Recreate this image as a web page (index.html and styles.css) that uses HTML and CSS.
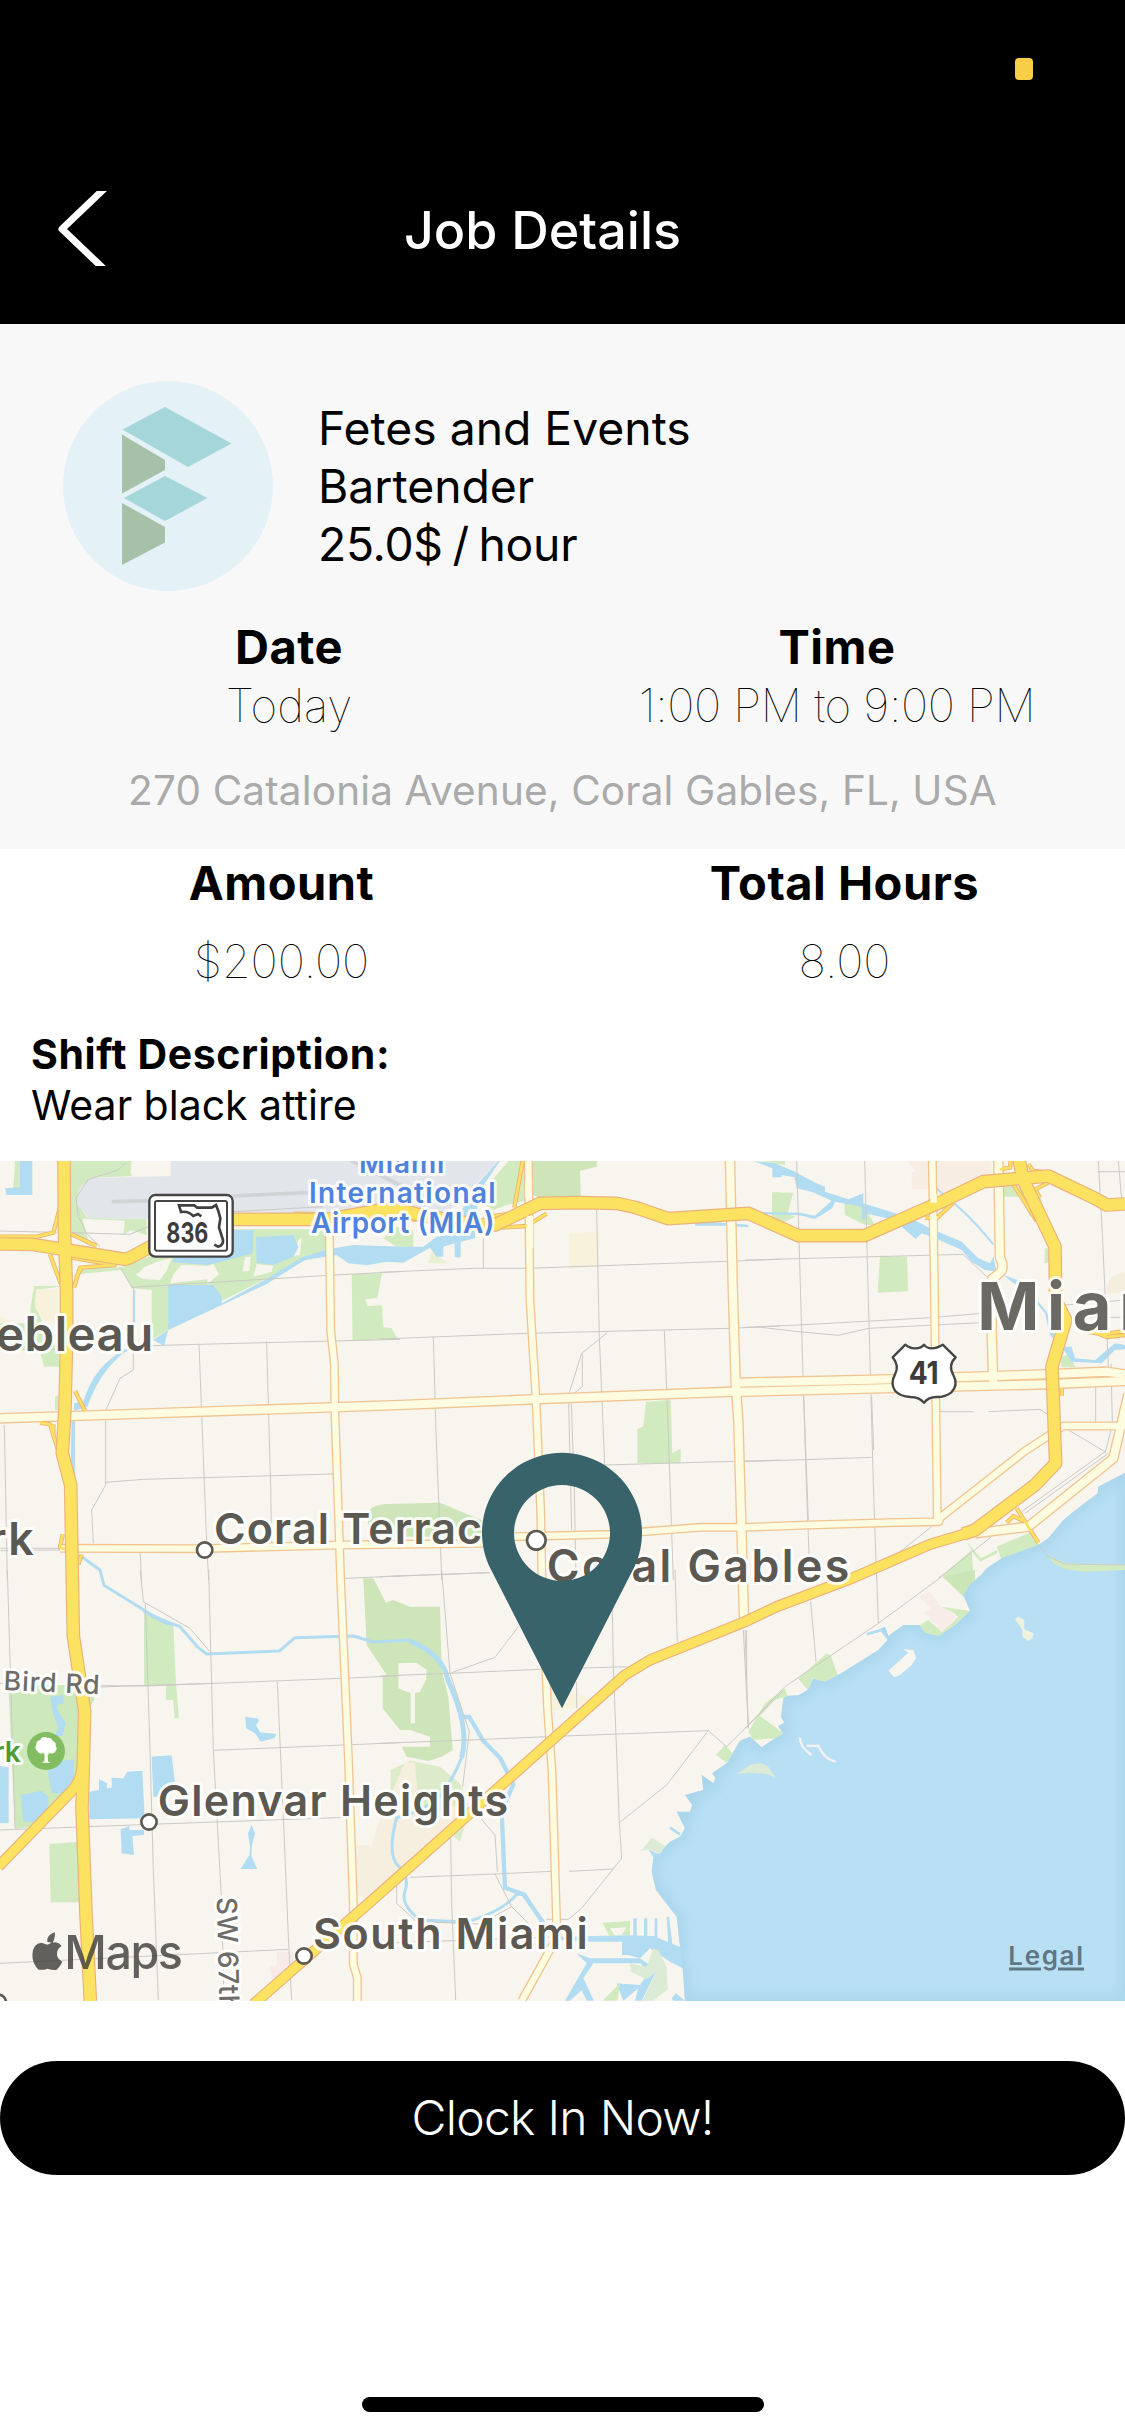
FILE: index.html
```html
<!DOCTYPE html>
<html lang="en">
<head>
<meta charset="utf-8">
<title>Job Details</title>
<link rel="stylesheet" href="styles.css">
</head>
<body>
<div class="screen">
  <header class="header">
    <div class="status"><span class="mic-dot"></span></div>
    <div class="nav">
      <svg class="back" width="50" height="75" viewBox="0 0 50 75"><path d="M48 -4L4 38 48 80" fill="none" stroke="#fff" stroke-width="7" stroke-linejoin="round"/></svg>
      <h1 class="title">Job Details</h1>
    </div>
  </header>

  <section class="summary">
    <div class="company">
      <svg class="logo" width="210" height="210" viewBox="63 381 210 210">
        <circle cx="168" cy="486" r="105" fill="#e4f1f7"/>
        <g fill="#a4d6da"><path d="M122.500 429.500L165 407l66.500 36.500L188 467z"/><path d="M124 498l41-22 42.500 22L165 521z"/></g>
        <g fill="#a7c1a9"><path d="M122 434.500L165 460v10l-43 23.500z"/><path d="M122 503l43 24v15.500L122 565z"/></g>
      </svg>
      <div class="company-text">
        <div>Fetes and Events</div>
        <div>Bartender</div>
        <div class="rate">25.0$ / hour</div>
      </div>
    </div>
    <div class="pair when">
      <div class="cell"><div class="label">Date</div><div class="value">Today</div></div>
      <div class="cell"><div class="label">Time</div><div class="value time">1:00 PM to 9:00 PM</div></div>
    </div>
    <div class="address">270 Catalonia Avenue, Coral Gables, FL, USA</div>
  </section>

  <section class="pair totals">
    <div class="cell"><div class="label">Amount</div><div class="value">$200.00</div></div>
    <div class="cell"><div class="label">Total Hours</div><div class="value">8.00</div></div>
  </section>

  <section class="shift">
    <div class="shift-title">Shift Description:</div>
    <div class="shift-text">Wear black attire</div>
  </section>

  <svg class="map" width="1125" height="840" viewBox="0 0 3375 2520">
    <defs>
      <path id="bay" d="M3375 935L3295 977 3293 997 3220 1052 3190 1077 3145 1132 3115 1152 3005 1192 2960 1222 2945 1240 2925 1257 2907 1272 2890 1302 2910 1349 2865 1392 2815 1425 2770 1409 2760 1392 2710 1392 2665 1425 2655 1397 2600 1422 2645 1410 2663 1437 2635 1467 2520 1539 2510 1542 2475 1562 2440 1552 2423 1587 2395 1603 2360 1605 2350 1612 2343 1667 2353 1685 2335 1695 2348 1717 2325 1732 2285 1759 2250 1727 2220 1739 2180 1807 2137 1837 2147 1852 2140 1867 2105 1842 2110 1887 2055 1902 2077 1932 2070 1952 2030 1952 2040 1972 2055 2002 2040 2027 2010 2042 1960 2092 1955 2132 1968 2187 2030 2267 2040 2357 2010 2362 2048 2422 2055 2520H3375z"/>
      <clipPath id="bay-clip"><use href="#bay"/></clipPath>
      <filter id="soft" x="-10%" y="-10%" width="120%" height="120%"><feGaussianBlur stdDeviation="16"/></filter>

      <g id="hwy">
        <path d="M192 0L193 200 200 400 200 527 195 740 187 877 212 972 217 1257 220 1425 254 1650 249 1850 246 1940 258 2260 271 2520"/>
        <path d="M0 249L95 250 375 295 390 290 450 258 600 190 700 175 985 175 1140 147 1200 147 1260 162 1440 192 1485 192 1620 127 1740 125 1850 127 1905 139 2005 173 2245 157 2395 224H2593L2825 122 2950 62 3065 52 3145 45 3285 112 3320 132 3375 129"/>
        <path d="M3057 -5L3070 57 3165 257 3167 417 3197 477 3156 617 3167 907 3105 972 3025 1032 2925 1107 2890 1119"/>
      </g>
      <g id="us1"><path d="M2930 1104L2900 1117 2790 1150 2555 1252 2330 1337 2235 1382 1950 1497 1875 1542 1140 2197 760 2530"/><path d="M-5 2117L215 1890Q240 1865 246 1820"/></g>
      <g id="ramps">
        <path d="M180 140L160 215 110 227H0M215 220L290 255M150 280L183 370M215 290L345 312 240 320 222 380M245 320L228 350M225 690L255 750M120 785L150 790 175 870M160 790V820M188 1120L180 1160 195 1165M245 1180L235 1210M1568 0L1543 140M1480 165L1600 150M1500 200L1580 195 1640 158M880 158L985 160M2775 170L2810 172 2860 125M3000 25L3030 20 3032 0M3040 70L3110 180M3085 10L3100 30 3145 35M3145 65L3105 85 3120 110M3185 680V705M3250 510L3310 520 3375 510M3290 516L3320 528 3375 522M3050 1042L3115 1145M3020 1085L3040 1065 3070 1080M1160 165L1440 200"/>
      </g>
      <g id="wide">
        <path d="M0 772L220 765 1200 732 1600 715 2195 692H2235L3135 670 3375 660"/>
        <path d="M2215 665L2675 655 3135 640 3320 632 3375 640"/>
        <path d="M2190 0L2198 370 2207 667 2215 780 2232 1370"/>
        <path d="M2995 0L3000 290Q3015 320 3000 335L2975 355V510L2980 680"/>
        <path d="M3385 700L3340 892 3085 1097 2925 1117"/>
      </g>
      <g id="narrow">
        <path d="M180 1162L600 1163 1020 1152 1440 1147 1545 1127 1830 1120 2100 1099H2235L2425 1092 2665 1085 2817 1082 2820 1070 3075 870 3190 795H3375"/>
        <path d="M988 207L992 507 1003 607 1005 760 1022 1257 1045 1787 1060 2227V2410L1072 2450V2520"/>
        <path d="M1585 0L1590 420 1608 712 1622 1050 1626 1257 1643 1650 1656 1830 1670 2290V2330L1565 2520"/>
        <path d="M2797 0L2803 370 2812 1080"/>
      </g>
    </defs>

    <rect width="3375" height="2520" fill="#f8f5ee"/>

    <!-- parks, airport and built-up areas -->
    <g transform="translate(0 -33)">
      <g fill="#d2eac0">
        <path d="M212 33H395V78L270 84 236 120 232 160 262 203 440 208V255L390 240 370 258 375 212 247 206 270 290 212 250z"/>
        <path d="M45 33H60V115H40z"/>
        <path d="M225 360L370 350 445 320 530 300 700 238H985V300L830 370 660 455 505 540 455 570V420L395 415 365 360 240 372z"/>
        <path d="M800 185L870 182 875 190H790z"/>
        <path d="M103 408H180L178 410 108 420 105 470 125 490V520L140 560 178 590V650H133L120 605 0 595V520L90 520 92 470z"/>
        <path d="M1055 372L1146 370 1132 445 1096 448 1103 468 1146 466 1150 532 1174 534 1194 567 1058 572z"/>
        <path d="M165 740L175 735V780H165z"/>
        <path d="M1185 230L1240 240V290H1190L1150 265z"/>
      </g>
      <g fill="#f8f5ee">
        <path d="M435 350L480 332 515 325 500 362 480 390 430 387 408 375z"/><path d="M522 370L545 345 625 347 640 342 657 373 622 402 622 388 510 400z"/>
        <path d="M735 322L752 320 748 362 728 364z"/><path d="M770 343L820 347 815 365 760 380z"/><path d="M895 270L905 262 900 315 880 318z"/>
      </g>
      <path d="M108 418H180V520L125 510 105 470zM0 500L40 515 0 518z" fill="#f8f1dc"/>
      <path d="M512 33V78L270 85 238 115 232 160 265 203 440 207 720 187 1340 190 1430 100 1495 33z" fill="#e2e5e9"/>
      <path d="M340 155L450 152 700 138 1000 124M1055 33L1240 125" fill="none" stroke="#d1d4d6" stroke-width="11" stroke-linecap="round"/>
      <path d="M395 33H510V73H392z" fill="#f8f5ee"/>
      <path d="M1105 1090Q1110 1065 1160 1062L1320 1058 1420 1100 1445 1110V1160H1105z" fill="#cde5b9"/>
    </g>
    <g transform="translate(1140 -33)">
      <path d="M445 33H650V50L600 62 602 143H480L445 130z" fill="#cde5b9"/>
      <path d="M385 33H445V150L380 165 340 180 290 150 345 80z" fill="#d2eac0"/>
      <path d="M567 250L657 245V350L567 356z" fill="#f8f1dc"/>
      <path d="M145 340L155 305 205 340z" fill="#e9efd3"/>
      <path d="M798 755L872 750 877 908 902 896V940H772V838L790 828z" fill="#d2eac0"/>
      <path d="M1177 128H1240L1220 200 1177 185z" fill="#d2eac0"/>
    </g>
    <g transform="translate(2235 -33)">
      <path d="M485 33H740V80L600 150 580 118H500V65H515z" fill="#f7ede2"/>
      <g fill="#d2eac0">
        <path d="M82 127H104L122 188 150 200 110 220 80 215z"/><path d="M405 317L486 320 489 424 398 428z"/>
        <path d="M775 105L820 110 880 120 890 150 855 200 830 140 775 140z"/><path d="M900 295H918V335L898 340z"/>
        <path d="M298 160L355 165 390 225 360 225 300 195z"/><path d="M945 620L970 615 992 652H950z"/>
        <path d="M50 33H120V45L80 38z"/><path d="M755 1190L860 1145 882 1185 770 1230z"/>
        <path d="M590 1278L680 1200 690 1335 655 1340z"/><path d="M665 1175L708 1225 755 1200 757 1210 705 1235 685 1210z"/>
      </g>
      <path d="M1100 380L1140 365V430H1085V405z" fill="#f5eede"/>
    </g>
    <g transform="translate(0 1227)">
      <path d="M25 345H240L285 385 255 440 240 620 100 770 45 777z" fill="#cde9bb"/>
      <g fill="#d2eac0"><path d="M432 130L520 165 528 340 537 445H523L520 390H498V345H432z"/><path d="M148 822L240 815V997H152z"/><path d="M0 900V968z"/></g>
      <path d="M1090 25H1120L1158 98 1180 90 1230 110 1320 110 1325 300 1345 380 1358 540 1325 560 1285 573 1220 560 1205 530H1290V500L1230 480 1200 480 1148 415V320L1160 315 1100 225z" fill="#cde5b9"/>
      <path d="M1195 280L1250 278 1280 300 1278 330 1260 365 1245 370V460H1232V370L1195 355z" fill="#f8f5ee"/>
      <path d="M1172 600L1230 572 1320 590 1380 640 1405 700 1390 780 1380 815 1340 780 1250 760 1172 740z" fill="#dcebc9"/>
      <path d="M1140 750L1215 575 1245 580 1260 740 1390 700 1400 720 1140 960 1110 990 1072 975 1068 828 1115 825z" fill="#f6eede"/>
      <path d="M808 1190L830 1185V1145H880V1180L820 1235z" fill="#f8ebe7"/>
      <path d="M1650 330L1725 370 1770 385 1720 415 1650 422z" fill="#f8f1dc"/>
    </g>

    <!-- water -->
    <use href="#bay" fill="#b8dff4"/>
    <g clip-path="url(#bay-clip)"><use href="#bay" fill="none" stroke="#a9d5eb" stroke-width="34" filter="url(#soft)"/></g>
    <g fill="#b2dcf1">
      <g transform="translate(0 -33)">
        <path d="M60 33H97V135H20L15 115 60 112z"/>
        <path d="M520 320L700 240H760L758 310 720 320 625 345 520 337z"/>
        <path d="M768 262L880 255 895 292 880 320 820 345 770 338z"/>
        <path d="M505 405H640L665 440V460L790 392 910 320 985 298 1060 285 1210 290 1270 290 1310 260 1420 240 1380 190 1425 110 1495 33H1500L1435 130 1425 265 1382 275V322H1364V280L1330 290V320H1310L1290 293 1210 338 1160 335 1100 346 1045 340 1010 315 915 330 800 402 505 540 492 587 460 570 505 540z"/>
        <path d="M375 598H388Q305 650 262 770L222 782V760L250 755Q280 650 375 598z"/>
        <path d="M216 815H224V980L214 950zM404 420V570" stroke="#b2dcf1" stroke-width="3"/>
      </g>
      <g transform="translate(2235 -33)">
        <path d="M25 33L90 40 150 65 205 95 240 110 240 125 310 148 355 130V160L450 190 490 200 555 235 650 275 700 325 735 340 745 320 755 365 720 360 680 335 650 300 560 260 530 250 512 267 470 230 450 210 360 190 365 205 350 210V170L270 155 262 175 210 207 160 195 50 192V186L165 188 210 197 260 152 200 125 155 115 148 82 110 75V82H82V55z"/>
        <path d="M775 375L830 395 905 485 930 560 960 590 980 590 990 625 1050 630 1110 580 1140 585V598L1110 600 1070 640 980 635 950 590 915 555 900 490 850 430 800 395z"/>
      </g>
      <g transform="translate(0 1227)">
        <path d="M736 440L770 445 778 450 768 465 780 487 830 492 822 505 782 515 765 490 738 475z"/>
        <path d="M755 765L765 790 755 830V860L772 897H722L748 855 750 830 744 790z"/>
        <path d="M455 560L515 556 525 640 470 680H460z"/><path d="M268 665L297 660V628L322 640 320 655 335 653V623L370 625 382 605 427 602 434 745 268 748z"/>
        <path d="M362 778L388 768V780H432V795L397 798 402 855 365 850z"/>
        <path d="M150 380L190 375V400L170 405 175 425 198 460 188 498H165L175 470 160 435z"/>
        <path d="M145 578L222 568V640L195 670H155L145 620z"/><path d="M0 588L26 592V760H0z"/><path d="M62 675L125 662 145 680V730L118 755H70z"/>
        <path d="M430 120L500 150 545 168 500 165 430 128z"/>
      </g>
      <g transform="translate(1140 1227)">
        <path d="M540 1100L740 1096 820 1098 902 1132 908 1195 870 1175 810 1135 780 1165 745 1155H726V1115H625L540 1110z"/>
        <path d="M760 1045H770V1100H760zM792 1045H802V1100H792zM824 1045H832V1110H824zM860 1040H867L878 1130H865z"/>
        <path d="M555 1292L585 1240 620 1180 590 1150 630 1165H780L830 1200 785 1292H765L775 1255 730 1292 710 1240 780 1245 808 1205 780 1180H640L610 1225 642 1292H620L605 1260 570 1292z"/>
        <path d="M875 1285L888 1270 915 1292H880zM805 838L830 850 850 858 820 862z"/>
      </g>
    </g>
    <g fill="none" stroke="#b2dcf1" stroke-linejoin="round" stroke-width="9">
      <path d="M245 1187L300 1227 312 1273 480 1377 540 1397 595 1460 620 1479 838 1470 885 1430 1060 1425 1120 1443 1230 1437"/>
      <path stroke-width="15" d="M1230 1440Q1330 1480 1345 1560 1410 1700 1385 1790"/>
      <path d="M1385 1790Q1340 1900 1290 1930T1190 1970Q1160 2080 1195 2115T1215 2190 1260 2277L1400 2283Q1510 2250 1550 2200L1575 2200 1630 2290"/>
      <path stroke-width="13" d="M1385 1668H1408L1450 1740 1500 1790 1540 1870 1505 1950 1515 2180 1570 2200 1630 2285"/>
      <path stroke-width="6" d="M2805 80Q2900 150 2980 250"/>
      <path stroke-width="8" d="M2010 2000L2040 2020M2085 190L2200 190M2100 185L2245 195"/>
    </g>

    <!-- shoreline parks and islands -->
    <g transform="translate(2235 1227)">
      <g fill="#d2eac0"><path d="M160 325L245 250 258 258 278 315 240 335 203 325 188 360z"/><path d="M10 485L60 400 120 355 128 378 90 390 45 437 115 490 90 505 25 510z"/><path d="M525 165L550 150 590 185 640 140 590 110 640 118 675 122 630 165 580 198 540 188z"/><path d="M595 20L690 0V30L672 45 655 75z" fill="#cbe5b8"/>
      <path d="M-87 555L-60 525 -38 548 -53 580z"/></g>
      <path d="M520 78L555 65 588 110 630 130 632 150 592 185 537 130 557 115z" fill="#f8ece9"/>
      <path d="M430 302L490 248 475 238 505 240 513 265 500 285 465 315 448 322z" fill="#f8f5ee"/>
      <path d="M-25 612L20 583 50 580 70 590 93 625 65 612 10 608z" fill="#dcebd5"/>
      <path d="M810 147L820 140 838 150V178L866 190 862 205 850 213 832 200V180z" fill="#eef1dd"/>
      <path d="M165 502Q163 530 200 555M185 527L220 528Q240 570 272 575" fill="none" stroke="#f3f4ef" stroke-width="7"/>
      <path d="M365 193L410 180 428 205" fill="none" stroke="#b2dcf1" stroke-width="8"/>
      <path d="M905 -45L960 -22 1040 -16H1140V0L1020 5 960 -2 925 -20z" fill="#d2eac0"/>
    </g>
    <g transform="translate(1140 1227)" fill="#dcebd5">
      <path d="M783 843L815 803 857 828 840 852 810 838z"/><path d="M750 1180L800 1190 820 1135 835 1140 860 1190 863 1258 820 1292H788L828 1205 800 1228 752 1205z"/>
      <path d="M668 1058L750 1053V1095H725L740 1072 690 1075 705 1098H688zM668 1292L720 1240 712 1292z" fill="#d2eac0"/>
    </g>

    <!-- local streets -->
    <g fill="none" stroke="#cbcac6" stroke-width="3">
      <path transform="translate(0 -33)" d="M0 243L170 247M215 248L390 253 445 230M375 40L355 60 265 88 228 145 235 200 260 250 300 290M362 355L395 410 400 415V660L360 685 318 780M317 812V1005L275 1080 280 1180M395 412L985 376 1200 365M0 600L180 597M455 587L595 583 1200 568M597 583L605 790 620 1180 626 1290M800 573L806 800 812 1010 815 1180M317 997L430 988 1000 972M13 825L22 1290M0 1195H180M0 1202L180 1200M421 1210L424 1290M700 185L970 170"/>
      <path transform="translate(1140 -33)" d="M0 367L280 355H440L1040 334 1200 328M0 567L440 550 1050 535 1200 528M160 560L168 850 180 1150 185 1290M310 200V355M649 140L658 560 668 800 674 945M853 542L865 850 880 1290M568 728L605 610 682 548M607 612V710L585 728M566 760L575 1140M574 760L583 1020 588 1290M674 945L1060 934 1200 930M0 1280L330 1268"/>
      <path transform="translate(2235 -33)" d="M0 330L655 313 725 380M0 532L160 525 560 503 710 490M30 530L160 545 280 556 370 535 710 518M155 33L170 540 184 1000 195 1290M176 740L190 1110M359 33L372 520 385 1000 395 1290M380 740L386 900M0 935L380 922M585 785H685M730 785L885 778 910 795M1060 33L1072 250 1090 650M1120 33L1130 150M1060 65H1140M970 840L1080 905 830 1085M1090 910L840 1090M1052 710V820M1098 640L1102 820M1098 840L1080 910M465 1205L560 1130M580 1285L740 1160M875 1180L910 1220 960 1242 1140 1245M1140 450L960 465M1030 502H1140"/>
      <path transform="translate(0 1227)" d="M22 0L45 775M0 340H20M300 347L440 348 1025 325 1200 317M300 351L440 346 640 340M421 0L430 95 570 175 630 245M436 100L450 540 460 900 475 1290M626 0L640 540 665 1000 672 1292M832 335L850 740 865 1100 875 1290M640 541L1200 518M0 780L450 763 1040 742M0 1180L865 1138M1035 25L1200 18"/>
      <path transform="translate(1140 1227)" d="M0 20L330 8M185 0L210 310 268 485 248 650M0 318L210 310 480 298 740 290M215 308L345 262 415 170M0 520L270 510 500 500 985 482 860 645 718 758M695 0L700 290 718 758 725 865 605 1015 565 1048H500M985 482L1040 530M885 0L892 215M1090 180L1105 475M1100 180V330M590 335V415M90 922L345 912 515 904M568 904L700 897M212 800L215 1000 227 1290M298 740L345 795 352 905M345 912L395 1010 460 1075M50 930V1000L110 1055 300 1062 395 1010M0 1120L540 1100"/>
      <path transform="translate(2235 1227)" d="M590 20L400 160 120 350 0 475M115 362L-55 530M197 95L213 275M395 15L400 160M0 180L10 475"/>
    </g>

    <!-- arterial roads -->
    <g fill="none" stroke-linejoin="round">
      <use href="#wide" stroke="#f0c592" stroke-width="32"/><use href="#narrow" stroke="#f0c592" stroke-width="27"/>
      <use href="#ramps" stroke="#ecb173" stroke-width="13"/>
      <use href="#wide" stroke="#fdfce0" stroke-width="24"/><use href="#narrow" stroke="#fdfce0" stroke-width="19"/>
      <use href="#ramps" stroke="#fbe061" stroke-width="8"/>
      <use href="#us1" stroke="#ecb27b" stroke-width="34"/><use href="#hwy" stroke="#ecb27b" stroke-width="41"/>
      <use href="#us1" stroke="#fbe361" stroke-width="27"/><use href="#hwy" stroke="#fbe361" stroke-width="34"/>
      <path d="M1585 60V110M1590 165V260M2192 70V130M2193 190V240M2801 100V125M2801 165V240" stroke="#fdfce0" stroke-width="19"/>
    </g>

    <!-- place names -->
    <g class="place">
      <text x="-12" y="569" font-size="142" textLength="472">ebleau</text>
      <text x="105" y="1182" font-size="134" text-anchor="end" letter-spacing="4">rk</text>
      <text x="642" y="1149" font-size="129" textLength="884">Coral Terrace</text>
      <text x="1640" y="1263" font-size="134" textLength="908">Coral Gables</text>
      <text x="473" y="1965" font-size="129" textLength="1051">Glenvar Heights</text>
      <text x="939" y="2365" font-size="129" textLength="824">South Miami</text>
      <text class="city" x="2932" y="507" font-size="200" letter-spacing="23">Miami</text>
      <g class="airport" text-anchor="middle">
        <text x="1205" y="37" font-size="84" textLength="256">Miami</text><text x="1207" y="127" font-size="84" textLength="560">International</text><text x="1208" y="215" font-size="84" textLength="550">Airport (MIA)</text>
      </g>
      <g class="street"><text transform="translate(10 1587) rotate(2.500)" font-size="80" textLength="288">Bird Rd</text><text transform="translate(650 2209) rotate(88.500)" font-size="83" letter-spacing="1">SW 67th Ave</text></g>
      <text class="park" x="62" y="1804" font-size="84" text-anchor="end">rk</text>
    </g>
    <g fill="#fff" stroke="#5b5952" stroke-width="8">
      <circle cx="614" cy="1167" r="23"/><circle cx="1609" cy="1138" r="28"/><circle cx="447" cy="1983" r="23"/><circle cx="912" cy="2385" r="23"/><circle cx="-5" cy="2524" r="23"/>
    </g>
    <g transform="translate(138 1770)"><circle r="57" fill="#82bd62"/><path fill="#fff" d="M-5 31L-4 12-9 6A12 12 0 0 1-26 0 12 12 0 0 1-29-18 13 13 0 0 1-17-33 13 13 0 0 1 4-39 14 14 0 0 1 20-30 13 13 0 0 1 29-15 12 12 0 0 1 29 0 13 13 0 0 1 12 6L5 13 6 31 14 35H-13z"/><path d="M-4 9L-9 4M5 9L10 4" stroke="#82bd62" stroke-width="2"/></g>

    <!-- route shields -->
    <g transform="translate(0 -33)">
      <rect x="448" y="135" width="250" height="185" rx="18" fill="#fff" stroke="#454545" stroke-width="7"/><rect x="465" y="153" width="216" height="149" rx="6" fill="#fff" stroke="#454545" stroke-width="6"/>
      <text class="route" x="499" y="278" font-size="86" textLength="126" lengthAdjust="spacingAndGlyphs">836</text>
      <path d="M604 199L594 192 580 198Q565 182 543 186L537 166H583L591 173H635L648 165 655 183 661 205 657 232 669 270Q670 287 654 290L643 284" fill="none" stroke="#404040" stroke-width="8"/>
    </g>
    <g transform="translate(2235 -33)">
      <path d="M481 584Q495 596 512 595T537 584Q545 595 560 595T593 584L632 622Q608 645 625 675 641 705 619 727 602 741 575 741 550 741 537 758 522 741 497 741 465 739 450 722 435 700 450 673 464 648 443 622z" fill="#fff" stroke="#454545" stroke-width="7" stroke-linejoin="round"/>
      <text class="route" x="491" y="702" font-size="94" textLength="90" lengthAdjust="spacingAndGlyphs">41</text>
    </g>

    <path d="M1686 1642L1472.400 1225A240 240 0 1 1 1899.600 1225zM1686 972a144 144 0 1 0 0 288 144 144 0 0 0 0-288z" fill="#39636b" fill-rule="evenodd"/>

    <g class="credit">
      <path d="M157 2347Q150 2343 142 2343 139 2322 165 2314 166 2332 157 2347zM142 2351Q155 2344 167 2344 179 2346 185 2355 169 2365 171 2382 173 2395 187 2402 181 2417 170 2426 162 2429 142 2423 128 2428 116 2426 97 2410 97 2382 98 2347 125 2345 133 2348 142 2351z"/>
      <text x="193" y="2424" font-size="140" textLength="356">Maps</text>
    </g>
    <g class="legal"><text x="3025" y="2412" font-size="78" textLength="224">Legal</text><path d="M3027 2424H3123M3174 2424H3252" stroke="#5f7784" stroke-width="9"/></g>
  </svg>

  <button class="clock-in">Clock In Now!</button>
  <div class="home"></div>
</div>
</body>
</html>
```
FILE: styles.css
```css
* { box-sizing: border-box; }
body { margin: 0; background: #fff; }
.screen {
  width: 1125px; height: 2436px; overflow: hidden;
  display: flex; flex-direction: column;
  font-family: Inter, "Liberation Sans", sans-serif; color: #000;
}
.header { height: 324px; background: #000; color: #fff; }
.status { height: 137px; padding: 58px 92px 0 0; display: flex; justify-content: flex-end; }
.mic-dot { width: 18px; height: 22px; border-radius: 4px; background: #f8ce46; }
.nav { height: 187px; display: grid; grid-template-columns: 110px 865px 150px; padding-top: 54px; }
.back { margin-left: 58px; }
.title { margin: 0; font-size: 52px; font-weight: 450; line-height: 80px; text-align: center; }
.summary { height: 525px; background: #f8f8f8; padding-top: 57px; }
.company { display: flex; padding-left: 63px; gap: 45px; }
.company-text { padding-top: 18px; font-size: 46.300px; line-height: 58px; white-space: nowrap; }
.rate { letter-spacing: -.3px; word-spacing: -3px; }
.pair { display: grid; text-align: center; }
.when { grid-template-columns: 578px 518px; padding-top: 27px; }
.label { font-size: 47px; font-weight: 750; line-height: 58px; letter-spacing: .5px; }
.value { font-size: 46px; font-weight: 100; line-height: 58px; }
.time { letter-spacing: -.4px; }
.address { margin-top: 28px; text-align: center; font-size: 40.500px; line-height: 58px; letter-spacing: .15px; color: #aaa; white-space: nowrap; }
.totals { grid-template-columns: 563px 563px; height: 168px; padding-top: 5px; }
.totals .value { margin-top: 20px; }
.shift { height: 144px; padding: 12px 0 0 31px; font-size: 41px; line-height: 51px; }
.shift-title { font-weight: 650; letter-spacing: .6px; }
.map { display: block; flex: none; }
.clock-in {
  margin: 60px 0 0; padding: 0; width: 1125px; height: 114px; border: 0; border-radius: 57px;
  background: #000; color: #fff; font: 350 48px/114px Inter, sans-serif; letter-spacing: -.7px;
}
.home { width: 402px; height: 15px; margin: 222px 0 0 362px; border-radius: 8px; background: #000; }

.place text { fill: #5b5952; font-weight: 600; paint-order: stroke; stroke: rgba(255,255,255,.85); stroke-width: 18px; stroke-linejoin: round; }
.place .city { fill: #6b6963; font-weight: 650; }
.place .airport text { fill: #4f82dc; }
.place .street text { fill: #6e6c68; font-weight: 450; }
.place .park { fill: #4e9a33; font-weight: 600; }
.route { fill: #3c3c3c; font-weight: 700; }
.credit { fill: #3c3c38; opacity: .8; font-weight: 500; }
.legal { fill: #5f7784; font-weight: 600; }
```
